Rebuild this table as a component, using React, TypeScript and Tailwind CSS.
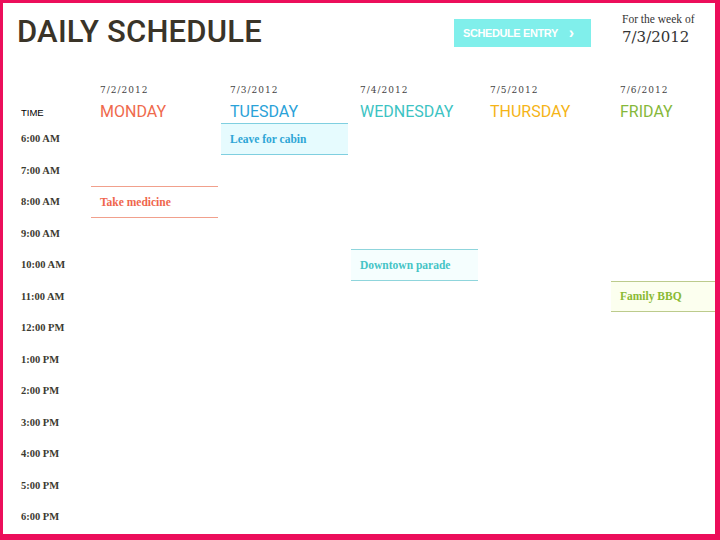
import React from "react";

const days = [
  { date: "7/2/2012", name: "MONDAY", color: "text-[#ef6a4c]" },
  { date: "7/3/2012", name: "TUESDAY", color: "text-[#2aa2d8]" },
  { date: "7/4/2012", name: "WEDNESDAY", color: "text-[#3cc3c3]" },
  { date: "7/5/2012", name: "THURSDAY", color: "text-[#f5b417]" },
  { date: "7/6/2012", name: "FRIDAY", color: "text-[#86b83a]" },
];

const times = [
  "6:00 AM",
  "7:00 AM",
  "8:00 AM",
  "9:00 AM",
  "10:00 AM",
  "11:00 AM",
  "12:00 PM",
  "1:00 PM",
  "2:00 PM",
  "3:00 PM",
  "4:00 PM",
  "5:00 PM",
  "6:00 PM",
];

type Ev = { text: string; cls: string };
const events: Record<string, Ev> = {
  "0-1": {
    text: "Leave for cabin",
    cls: "border-[#7fcfe0] bg-[#e6fbfe] text-[#2ea6d6]",
  },
  "2-0": {
    text: "Take medicine",
    cls: "border-[#f1a08c] bg-white text-[#ef664c]",
  },
  "4-2": {
    text: "Downtown parade",
    cls: "border-[#8fd5dc] bg-[#f5fefe] text-[#45c4c6]",
  },
  "5-4": {
    text: "Family BBQ",
    cls: "border-[#bccb8c] bg-[#fcffef] text-[#8aba34]",
  },
};

const serif = "font-['Liberation_Serif',serif]";

export default function App() {
  return (
    <div className="w-[720px] h-[540px] bg-white border-[#ec0e5b] border-l-[3px] border-t-[3px] border-r-[5px] border-b-[6px] overflow-hidden">
      {/* Top header */}
      <div className="flex h-[70px]">
        <div className="pl-[14px] pt-[13px] w-[451px]">
          <div className="font-['Roboto',sans-serif] font-medium text-[31px] leading-[31px] text-[#3a3428] tracking-[0.2px] whitespace-nowrap">
            DAILY SCHEDULE
          </div>
        </div>
        <div className="pt-[16px] w-[168px]">
          <div className="w-[137px] h-[28px] bg-[#80efeb] flex items-center pl-[9px] font-['Liberation_Sans',sans-serif] font-bold text-[11px] text-white tracking-[-0.4px]">
            <span>SCHEDULE ENTRY</span>
            <span className="ml-[11px] text-[16px] leading-none">›</span>
          </div>
        </div>
        <div className="pt-[10px]">
          <div className={`${serif} text-[11.5px] leading-[13px] text-[#333]`}>
            For the week of
          </div>
          <div className="font-['DejaVu_Serif',serif] text-[15px] leading-[20px] text-[#333] mt-[1px]">
            7/3/2012
          </div>
        </div>
      </div>

      {/* Column headers */}
      <div className="grid grid-cols-[85px_127px_127px_127px_127px_1fr] gap-x-[3px] h-[50px]">
        <div className="pl-[18px] pt-[34px] font-['Liberation_Sans',sans-serif] text-[9.5px] leading-[12px] text-black">
          TIME
        </div>
        {days.map((d) => (
          <div key={d.name} className="pl-[9px]">
            <div className="font-['DejaVu_Serif',serif] text-[9px] leading-[12px] tracking-[1px] text-[#444] mt-[11px]">
              {d.date}
            </div>
            <div
              className={`font-['Roboto',sans-serif] text-[16px] leading-[20px] mt-[6px] ${d.color}`}
            >
              {d.name}
            </div>
          </div>
        ))}
      </div>

      {/* Time rows */}
      <div className="flex flex-col">
        {times.map((t, r) => (
          <div
            key={t}
            className="grid grid-cols-[85px_127px_127px_127px_127px_1fr] gap-x-[3px] h-[31.5px]"
          >
            <div
              className={`${serif} font-bold text-[10.5px] text-[#3b3a30] pl-[18px] pt-[1px] flex items-center`}
            >
              {t}
            </div>
            {days.map((d, c) => {
              const ev = events[`${r}-${c}`];
              return ev ? (
                <div
                  key={d.name}
                  className={`border-t border-b flex items-center pl-[9px] pt-[1px] ${serif} font-bold text-[11.5px] ${ev.cls}`}
                >
                  {ev.text}
                </div>
              ) : (
                <div key={d.name} />
              );
            })}
          </div>
        ))}
      </div>
    </div>
  );
}
